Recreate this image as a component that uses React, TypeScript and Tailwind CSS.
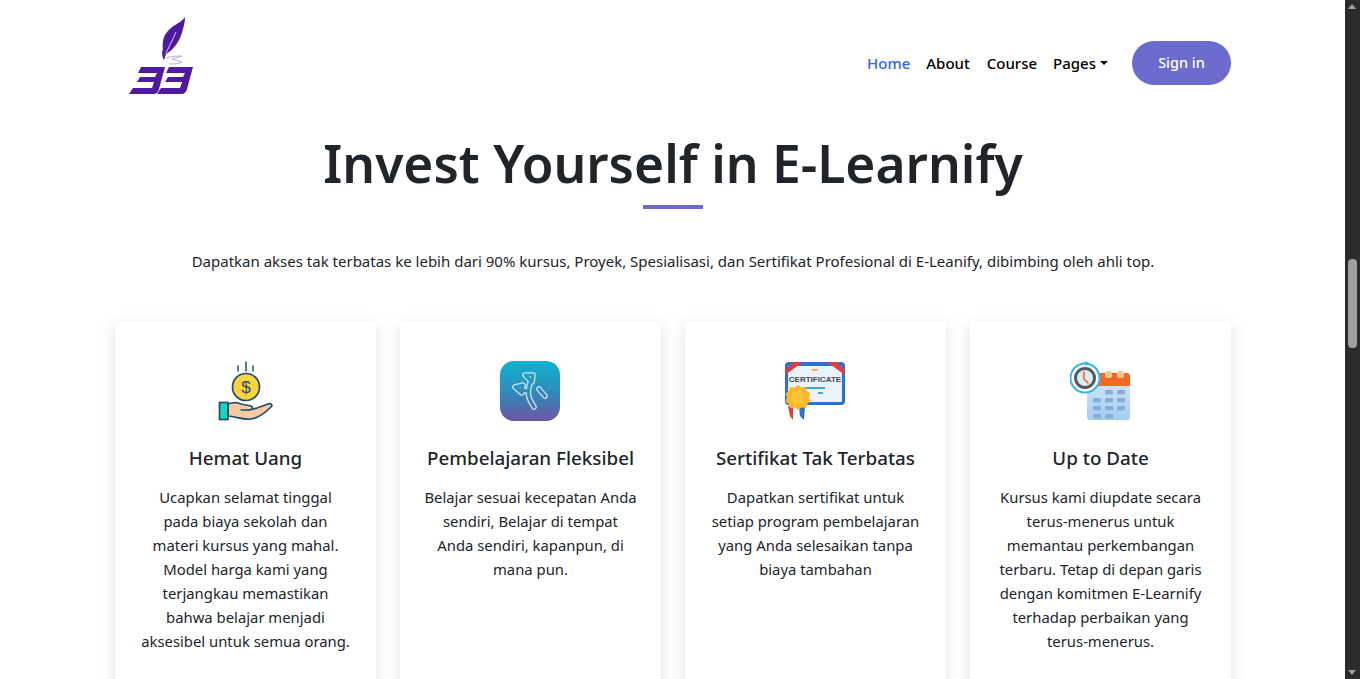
import React from 'react';

const features = [
    {
        title: 'Hemat Uang',
        lines: ['Ucapkan selamat tinggal', 'pada biaya sekolah dan', 'materi kursus yang mahal.', 'Model harga kami yang', 'terjangkau memastikan', 'bahwa belajar menjadi', 'aksesibel untuk semua orang.'],
        icon: 'money',
    },
    {
        title: 'Pembelajaran Fleksibel',
        lines: ['Belajar sesuai kecepatan Anda', 'sendiri, Belajar di tempat', 'Anda sendiri, kapanpun, di', 'mana pun.'],
        icon: 'flex',
    },
    {
        title: 'Sertifikat Tak Terbatas',
        lines: ['Dapatkan sertifikat untuk', 'setiap program pembelajaran', 'yang Anda selesaikan tanpa', 'biaya tambahan'],
        icon: 'cert',
    },
    {
        title: 'Up to Date',
        lines: ['Kursus kami diupdate secara', 'terus-menerus untuk', 'memantau perkembangan', 'terbaru. Tetap di depan garis', 'dengan komitmen E-Learnify', 'terhadap perbaikan yang', 'terus-menerus.'],
        icon: 'date',
    },
];

const digit = 'M12 50 H36 L30 72 Q29 77 24 77 H0 L4 71 H23 L25 65 H8 L11 60 H26 L28 56 H9 Z';

const Logo = () => (
    <svg width="66" height="78" viewBox="0 0 66 78" fill="none">
        {/* bulu pena */}
        <path d="M56 0 C56 5 55 8 54 12 C53 17 50 24 47 28 C44 32 40 35 36 38 C34 36 33 30 34 24 C35 17 40 12 46 8 C50 6 54 3 56 0 Z" fill="#4f1a9e" />
        <path d="M47 15 C44 22 40 30 36 38" stroke="#d9c8f0" strokeWidth="1" />
        <path d="M33 33 L37 37 L35 43 Q33 41 33 33 Z" fill="#4f1a9e" />
        <path d="M37 41 C42 39 48 39 53 39 L43 42 L53 45 C50 47 45 47 40 47" stroke="#b7a5d8" strokeWidth="0.9" />
        {/* angka 33 */}
        <path d={digit} fill="#4f1a9e" />
        <path d={digit} fill="#4f1a9e" transform="translate(28 0)" />
    </svg>
);

const MoneyIcon = () => (
    <svg width="60" height="60" viewBox="0 0 60 60" fill="none">
        <path d="M23 5 V10 M31 1 V10 M38 5 V10" stroke="#2a5d7c" strokeWidth="1.6" strokeLinecap="round" />
        <circle cx="31" cy="26" r="13.5" fill="#fbd43f" stroke="#1f4e6e" strokeWidth="1.7" />
        <text x="31" y="32" textAnchor="middle" fontSize="17" fontFamily="'Liberation Sans', sans-serif" fill="#1f4e6e">$</text>
        <path d="M13 43 C18 41 22 41 26 43 L36 45 C38 46 38 49 34 49 L42 47 L53 43 C56 42 58 44 56 46 C50 52 44 57 36 58 C28 59 22 56 13 55 Z" fill="#f7c9a5" stroke="#1f4e6e" strokeWidth="1.7" strokeLinejoin="round" />
        <path d="M26 49 H34" stroke="#1f4e6e" strokeWidth="1.4" strokeLinecap="round" />
        <rect x="4.5" y="41.5" width="8.5" height="17" fill="#17d6bc" stroke="#1f4e6e" strokeWidth="1.7" />
    </svg>
);

const flexShapes = (
    <>
        <path d="M31 19 C28 27 27 33 30 39 L34 46" />
        <path d="M25 14 L33 14 L32 21 Z" />
        <path d="M27 30 L20 28" />
        <path d="M15 26 L23 24 L22 32 Z" />
        <path d="M39 28 L45 35" />
    </>
);

const FlexIcon = () => (
    <svg width="60" height="60" viewBox="0 0 60 60" fill="none">
        <defs>
            <linearGradient id="flexBg" gradientUnits="userSpaceOnUse" x1="0" y1="0" x2="0" y2="60">
                <stop offset="0" stopColor="#0fb2d1" />
                <stop offset="0.5" stopColor="#2d8dbb" />
                <stop offset="1" stopColor="#6d55a3" />
            </linearGradient>
        </defs>
        <rect width="60" height="60" rx="14" fill="url(#flexBg)" />
        {/* tabung bergaris: garis terang lalu garis dalam warna latar */}
        <g stroke="#d3e8f4" strokeWidth="5.6" strokeLinejoin="round" strokeLinecap="round">{flexShapes}</g>
        <g stroke="url(#flexBg)" strokeWidth="3.2" strokeLinejoin="round" strokeLinecap="round">{flexShapes}</g>
    </svg>
);

const CertIcon = () => (
    <svg width="60" height="60" viewBox="0 0 60 60" fill="none">
        <rect x="0" y="1" width="60" height="43" rx="4" fill="#2b6fd0" />
        <rect x="3" y="5" width="54" height="36" rx="1" fill="#eaf3fc" />
        <path d="M8 1 H18 L0 14 V9 Z" fill="#d9403f" />
        <path d="M52 1 H42 L60 14 V9 Z" fill="#d9403f" />
        <rect x="27" y="8" width="6" height="1.6" fill="#f5a623" />
        <text x="30" y="21" textAnchor="middle" fontSize="8" fontWeight="700" fontFamily="'Liberation Sans', sans-serif" fill="#43474e">CERTIFICATE</text>
        <rect x="18" y="26" width="22" height="2" fill="#3fa3e8" />
        <rect x="33" y="31" width="5" height="2" fill="#3fa3e8" />
        <path d="M3 45 H9 L8 59 L5 55 Z" fill="#d9403f" />
        <path d="M8 45 H15 L14 57 L11 55 L8 59 Z" fill="#fff" />
        <path d="M14 45 H20 L19 59 L15 55 Z" fill="#2b6fd0" />
        <path d="M13 24 L16.5 26.5 L21 26 L22 30 L25.5 32.5 L24 36.5 L25.5 40.5 L22 43 L21 47 L16.5 46.5 L13 49 L9.5 46.5 L5 47 L4 43 L0.5 40.5 L2 36.5 L0.5 32.5 L4 30 L5 26 L9.5 26.5 Z" fill="#fbb829" />
        <circle cx="13" cy="36.5" r="7" fill="#fdc43a" />
    </svg>
);

const DateIcon = () => (
    <svg width="60" height="60" viewBox="0 0 60 60" fill="none">
        <defs>
            <linearGradient id="calBg" x1="0" y1="0" x2="0" y2="1">
                <stop offset="0" stopColor="#d8e9f9" />
                <stop offset="1" stopColor="#a3cdf3" />
            </linearGradient>
        </defs>
        <rect x="17" y="14" width="43" height="45" rx="3" fill="url(#calBg)" />
        <path d="M17 25 V15 Q17 12 20 12 H57 Q60 12 60 15 V25 Z" fill="#f26a21" />
        <rect x="35" y="10" width="7" height="7" rx="2.5" fill="#f6c48b" />
        <rect x="47" y="10" width="7" height="7" rx="2.5" fill="#f6c48b" />
        {[[35, 29], [47, 29], [23, 37], [35, 37], [47, 37], [23, 45], [35, 45], [47, 45], [23, 53], [35, 53]].map(([x, y]) => (
            <rect key={`${x}-${y}`} x={x} y={y} width="8" height="4.5" rx="1" fill="#83b0dc" />
        ))}
        <circle cx="15" cy="17" r="14.5" fill="#ffffff" stroke="#33b5ee" strokeWidth="2" />
        <path d="M15 0 L20 2.5 L15 5 Z" fill="#33b5ee" />
        <circle cx="15" cy="17" r="9.5" fill="#dfe9f2" stroke="#555a60" strokeWidth="3" />
        <path d="M14 11 V18 L18 22" stroke="#e8632a" strokeWidth="1.5" strokeLinecap="round" />
    </svg>
);

const icons: Record<string, React.ReactNode> = {
    money: <MoneyIcon />,
    flex: <FlexIcon />,
    cert: <CertIcon />,
    date: <DateIcon />,
};

export default function App() {
    return (
        <div className="flex h-[679px] overflow-hidden bg-white text-[#212529] font-['Noto_Sans',sans-serif]">
            <div className="flex-1 min-w-0 overflow-hidden">
                <div className="w-[1116px] ml-[115px]">
                    <nav className="flex items-center justify-between h-[110px] pl-[14px]">
                        <div className="mb-[1px] pt-[3px]"><Logo /></div>
                        <div className="flex items-center mt-[16px]">
                            <a className="text-[15px] font-medium text-[#3366ee] mr-4">Home</a>
                            <a className="text-[15px] font-medium text-black mr-[17px]">About</a>
                            <a className="text-[15px] font-medium text-black mr-4">Course</a>
                            <a className="flex items-center text-[15px] font-medium text-black">
                                Pages
                                <span className="ml-[4px] w-0 h-0 border-x-[4px] border-x-transparent border-t-[4px] border-t-black" />
                            </a>
                            <button className="ml-6 w-[99px] h-[44px] rounded-full bg-[#6c6bce] text-white text-[14.5px] font-medium">Sign in</button>
                        </div>
                    </nav>

                    <h1 className="text-center text-[51.5px] leading-[67px] font-semibold mt-[20px]">Invest Yourself in E-Learnify</h1>
                    <div className="w-[60px] h-1 bg-[#6c6bce] mx-auto mt-[8px]" />
                    <p className="text-center text-[15px] leading-6 mt-[40px]">
                        Dapatkan akses tak terbatas ke lebih dari 90% kursus, Proyek, Spesialisasi, dan Sertifikat Profesional di E-Leanify, dibimbing oleh ahli top.
                    </p>

                    <div className="grid grid-cols-4 gap-6 mt-[48px]">
                        {features.map((f) => (
                            <div key={f.title} className="h-[420px] rounded-[4px] bg-white pt-10 shadow-[0_4px_16px_rgba(0,0,0,0.12)]">
                                <div className="flex justify-center h-[60px] pr-[1px]">{icons[f.icon]}</div>
                                <h3 className="mt-[22px] text-center text-[18.8px] leading-[30px] font-medium">{f.title}</h3>
                                <div className="mt-[12px] text-center text-[14.85px] leading-6">
                                    {f.lines.map((line) => (
                                        <div key={line}>{line}</div>
                                    ))}
                                </div>
                            </div>
                        ))}
                    </div>
                </div>
            </div>

            {/* scrollbar */}
            <div className="relative w-[15px] shrink-0 bg-[#2c2c2c]">
                <span className="absolute left-[3px] top-[4px] w-0 h-0 border-x-[4.5px] border-x-transparent border-b-[5px] border-b-[#a0a0a0]" />
                <div className="absolute left-[3px] top-[259px] w-[9px] h-[89px] rounded-[4px] bg-[#9e9e9e]" />
                <span className="absolute left-[3px] bottom-[4px] w-0 h-0 border-x-[4.5px] border-x-transparent border-t-[5px] border-t-[#a0a0a0]" />
            </div>
        </div>
    );
}
